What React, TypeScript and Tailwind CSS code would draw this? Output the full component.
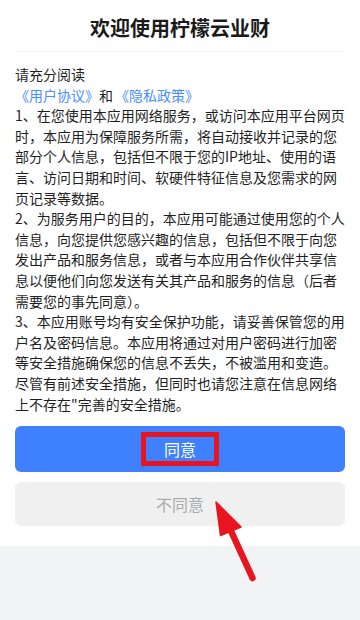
import React from 'react';

const FONT = { fontFamily: '"Noto Sans CJK SC", "Noto Sans", sans-serif' };

export default function App() {
  return (
    <div className="relative w-[360px] h-[620px] bg-[#f2f3f5] overflow-hidden" style={FONT}>
      <div className="bg-white px-[15px] pb-[20px]">
        {/* Title */}
        <div className="h-[52px] pt-[4px] flex items-center justify-center border-b border-[#f2f2f2]">
          <h1 className="text-[20px] font-semibold text-[#1a1a1a] leading-none">欢迎使用柠檬云业财</h1>
        </div>

        {/* Agreement text */}
        <div className="mt-[12px] text-[14px] leading-[20.6px] text-[#1f1f1f]">
          <p>请充分阅读</p>
          <p>
            <span className="text-[#4a8dff]">《用户协议》</span>和<span className="ml-[2px] text-[#4a8dff]">《隐私政策》</span>
          </p>
          <p>
            1、在您使用本应用网络服务，或访问本应用平台网页时，本应用为保障服务所需，将自动接收并记录的您部分个人信息，包括但不限于您的IP地址、使用的语言、访问日期和时间、软硬件特征信息及您需求的网页记录等数据。
          </p>
          <p>
            2、为服务用户的目的，本应用可能通过使用您的个人信息，向您提供您感兴趣的信息，包括但不限于向您发出产品和服务信息，或者与本应用合作伙伴共享信息以便他们向您发送有关其产品和服务的信息（后者需要您的事先同意）。
          </p>
          <p>
            3、本应用账号均有安全保护功能，请妥善保管您的用户名及密码信息。本应用将通过对用户密码进行加密等安全措施确保您的信息不丢失，不被滥用和变造。尽管有前述安全措施，但同时也请您注意在信息网络上不存在"完善的安全措施。
          </p>
        </div>

        {/* Buttons */}
        <div className="mt-[12px] flex flex-col gap-[10px]">
          <button className="h-[46px] rounded-[6px] bg-[#3f80ff] flex items-center justify-center">
            <span className="w-[78px] h-[34px] border-[5px] border-[#e8141f] flex items-center justify-center text-[16px] text-white">
              同意
            </span>
          </button>
          <button className="h-[44px] rounded-[6px] bg-[#f0f0f0] flex items-center justify-center text-[16px] text-[#ababab]">
            不同意
          </button>
        </div>
      </div>

      {/* Annotation arrow */}
      <svg className="absolute left-0 top-0 pointer-events-none" width="360" height="620" viewBox="0 0 360 620">
        <line x1="231" y1="531" x2="252.5" y2="578" stroke="#e8141f" strokeWidth="6.5" strokeLinecap="round" />
        <polygon points="216,502 241,527 220.5,535.5" fill="#e8141f" stroke="#e8141f" strokeWidth="1.5" strokeLinejoin="round" />
      </svg>
    </div>
  );
}
